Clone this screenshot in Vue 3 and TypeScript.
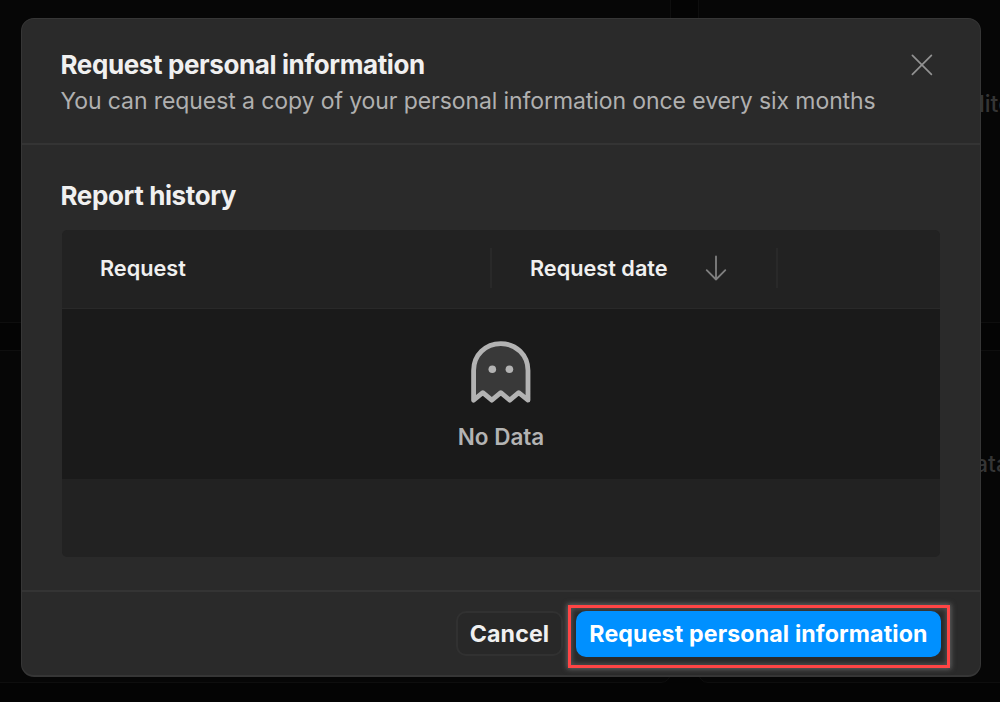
<script setup lang="ts">
interface Column {
  key: string
  label: string
  sorted?: boolean
}

const title = 'Request personal information'
const columns: Column[] = [
  { key: 'request', label: 'Request' },
  { key: 'date', label: 'Request date', sorted: true },
  { key: 'actions', label: '' },
]
</script>

<template>
  <div class="screen">
    <div class="backdrop">
      <div class="panel"></div>
      <div class="panel"><span class="peek peek-top">lite</span></div>
      <div class="panel"></div>
      <div class="panel"><span class="peek peek-bottom">ata</span></div>
    </div>

    <section class="dialog" role="dialog" aria-labelledby="dialog-title">
      <header class="head">
        <div class="head-text">
          <h1 id="dialog-title" class="title">{{ title }}</h1>
          <p class="subtitle">You can request a copy of your personal information once every six months</p>
        </div>
        <button class="close" type="button" aria-label="Close">
          <svg width="22" height="22" viewBox="0 0 22 22" fill="none" stroke="#929292" stroke-width="1.7" stroke-linecap="round">
            <path d="M1.4 1.4 20.4 20.4M20.4 1.4 1.4 20.4" />
          </svg>
        </button>
      </header>

      <div class="body">
        <h2 class="section-title">Report history</h2>
        <div class="table">
          <div class="row">
            <div v-for="col in columns" :key="col.key" class="cell" :class="col.key">
              <span>{{ col.label }}</span>
              <svg v-if="col.sorted" class="arrow" width="22" height="26" viewBox="0 0 22 26" fill="none" stroke="#808080" stroke-width="1.8" stroke-linecap="round" stroke-linejoin="round">
                <path d="M11 1.5V24.5M1.7 15.2 11 24.5 20.3 15.2" />
              </svg>
            </div>
          </div>
          <div class="empty">
            <svg width="60" height="62" viewBox="0 0 60 62">
              <path
                d="M2.6 59.2V29.5C2.6 14.2 14.4 2.6 29.8 2.6S57 14.2 57 29.5V59.2L47.7 51.7 38.8 59.2 29.8 51.7 20.8 59.2 11.8 51.7Z"
                fill="#393939" stroke="#b3b3b3" stroke-width="4.8" stroke-linejoin="round"
              />
              <circle cx="21.3" cy="28.3" r="3.8" fill="#b3b3b3" />
              <circle cx="38.4" cy="28.3" r="3.8" fill="#b3b3b3" />
            </svg>
            <span class="empty-label">No Data</span>
          </div>
        </div>
      </div>

      <footer class="foot">
        <button class="btn cancel" type="button">Cancel</button>
        <div class="highlight">
          <button class="btn primary" type="button">{{ title }}</button>
        </div>
      </footer>
    </section>
  </div>
</template>

<style>
html,
body {
  margin: 0;
  background: #050505;
}
</style>

<style scoped>
* {
  box-sizing: border-box;
}

.screen {
  position: relative;
  width: 1000px;
  height: 702px;
  padding: 18px 19px 25px 21px;
  overflow: hidden;
  background: #040404;
  color: #f0f0f0;
  font-family: Inter, sans-serif;
}

.backdrop {
  position: absolute;
  inset: -20px -30px -40px -30px;
  display: grid;
  grid-template-columns: 701px 359px;
  grid-template-rows: 343px 333px;
  column-gap: 27px;
  row-gap: 27px;
}

.panel {
  position: relative;
  border: 1px solid #0e0e0e;
  border-radius: 10px;
  background: #060606;
}

.peek {
  position: absolute;
  color: #353535;
  font-size: 23px;
  font-weight: 500;
  line-height: 28px;
}

.peek-top {
  left: 280px;
  top: 109px;
}

.peek-bottom {
  left: 276px;
  top: 99px;
}

.dialog {
  position: relative;
  display: grid;
  grid-template-rows: 126px 1fr 85px;
  height: 659px;
  border: 1px solid #363636;
  border-bottom-width: 2px;
  border-radius: 13px;
  background: #2a2a2a;
}

.head {
  display: flex;
  justify-content: space-between;
  padding: 29px 47.5px 0 38.5px;
  border-bottom: 2px solid #343434;
}

.title,
.section-title {
  margin: 0;
  font-size: 26px;
  font-weight: 700;
  line-height: 34px;
  white-space: nowrap;
  letter-spacing: -0.39px;
}

.subtitle {
  margin: 4px 0 0;
  color: #b0b0b0;
  font-size: 23px;
  letter-spacing: -0.09px;
  line-height: 30px;
  white-space: nowrap;
}

.close {
  display: flex;
  height: 22px;
  margin-top: 6px;
  padding: 0;
  border: 0;
  background: none;
}

.body {
  padding: 34px 40px 0;
}

.section-title {
  margin-left: -1.5px;
}

.table {
  height: 327px;
  margin-top: 17px;
  border-radius: 5px;
  background: #222222;
  overflow: hidden;
}

.row {
  display: grid;
  grid-template-columns: 430px 286px 1fr;
  align-items: center;
  height: 79px;
  padding-bottom: 2px;
  border-bottom: 1px solid #292929;
}

.cell {
  display: flex;
  align-items: center;
  height: 40px;
  padding-left: 38px;
  border-right: 2px solid #292929;
  font-size: 21.7px;
  font-weight: 600;
}

.actions {
  border-right: 0;
}

.arrow {
  margin-left: 37.5px;
}

.empty {
  display: flex;
  flex-direction: column;
  align-items: center;
  height: 170px;
  padding-top: 32px;
  background: #1a1a1a;
}

.empty-label {
  margin-top: 19px;
  color: #b3b3b3;
  font-size: 22.5px;
  font-weight: 600;
  line-height: 30px;
}

.foot {
  display: flex;
  justify-content: flex-end;
  align-items: flex-start;
  gap: 5px;
  padding: 13px 30px 0 0;
  border-top: 2px solid #343434;
}

.btn {
  padding: 0;
  border-radius: 10px;
  color: #f0f0f0;
  font-family: inherit;
  font-size: 23.2px;
  font-weight: 700;
  letter-spacing: 0.13px;
  white-space: nowrap;
}

.cancel {
  width: 107px;
  height: 45px;
  margin-top: 6px;
  border: 2px solid #313131;
  background: #282828;
}

.highlight {
  width: 382px;
  height: 63px;
  padding: 3px 6px 3px 5px;
  border: 3px solid #ff4545;
  box-shadow: 0 0 5px 1px #666666, inset 0 0 5px 1px #555555;
}

.primary {
  width: 365px;
  height: 46px;
  border: 0;
  background: #0090ff;
  color: #ffffff;
}
</style>
